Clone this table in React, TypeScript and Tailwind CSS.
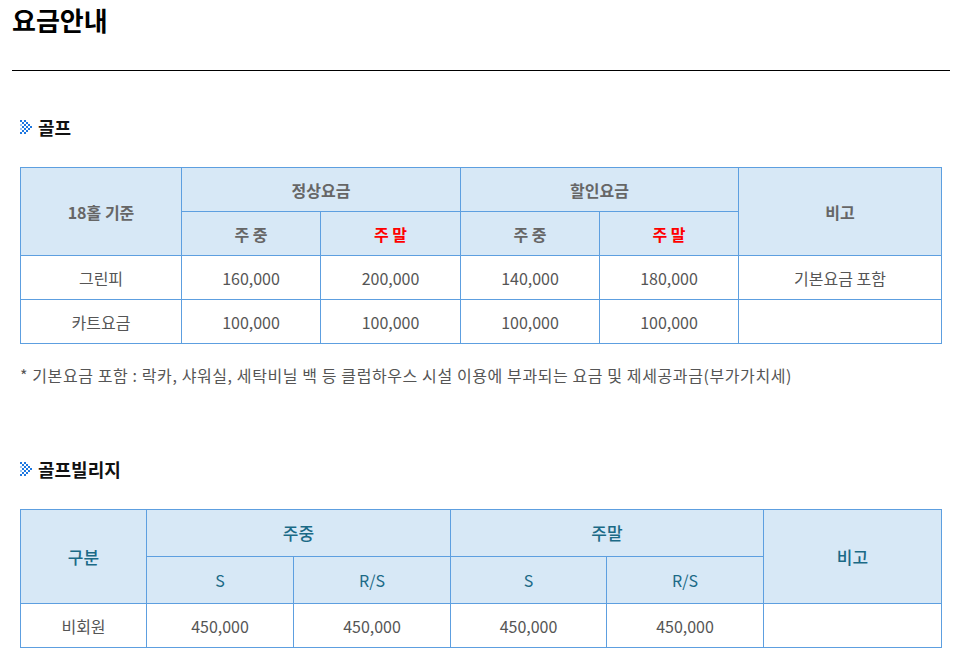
import React from "react";

const font = { fontFamily: '"Noto Sans CJK KR", "Noto Sans", sans-serif' };

// dotted double chevron, 2px cells
const ICON_CELLS: [number, number][] = [
  [0, 0], [2, 0],
  [1, 1], [3, 1],
  [2, 2], [4, 2], [0, 2],
  [3, 3], [5, 3], [1, 3],
  [2, 4], [4, 4], [0, 4],
  [1, 5], [3, 5],
  [0, 6], [2, 6],
];

function ArrowIcon() {
  return (
    <svg width="13" height="14" viewBox="0 0 13 14" className="shrink-0">
      {ICON_CELLS.map(([c, r], i) => (
        <rect
          key={i}
          x={c * 2}
          y={r * 2}
          width="2"
          height="2"
          fill={c === 0 && (r === 2 || r === 4) ? "#9cc6f2" : "#1f78e0"}
        />
      ))}
    </svg>
  );
}

function SectionTitle({ children }: { children: React.ReactNode }) {
  return (
    <div className="flex items-center gap-[5px] pl-[20px]">
      <ArrowIcon />
      <h3 className="text-[18px] font-bold text-[#111] leading-none">{children}</h3>
    </div>
  );
}

const th = "border border-[#5d9fe0] bg-[#d7e8f6] text-center";
const th1 = `${th} text-[16px] font-bold text-[#666]`;
const th1Red = `${th} text-[16px] font-bold text-[#ff0000]`;
const th2 = `${th} text-[17px] font-medium text-[#1b6a86]`;
const th2Sub = `${th} text-[16px] font-normal text-[#1b6a86]`;
const td = "border border-[#5d9fe0] bg-white text-center text-[16px] text-[#555]";

export default function App() {
  return (
    <div className="bg-white w-[965px] h-[672px] overflow-hidden" style={font}>
      <div className="px-[12px] pt-[2px]">
        <h2 className="text-[26px] font-bold text-black leading-[36px]">요금안내</h2>
        <div className="mt-[32px] border-t border-black w-[938px]" />
      </div>

      <div className="mt-[47px]">
        <SectionTitle>골프</SectionTitle>
      </div>

      <div className="px-[20px] mt-[31px]">
        <table className="w-[922px] border-collapse table-fixed">
          <colgroup>
            <col className="w-[161px]" />
            <col className="w-[139px]" />
            <col className="w-[140px]" />
            <col className="w-[139px]" />
            <col className="w-[139px]" />
            <col />
          </colgroup>
          <thead>
            <tr className="h-[44px]">
              <th rowSpan={2} className={th1}>18홀 기준</th>
              <th colSpan={2} className={th1}>정상요금</th>
              <th colSpan={2} className={th1}>할인요금</th>
              <th rowSpan={2} className={th1}>비고</th>
            </tr>
            <tr className="h-[44px]">
              <th className={th1}>주 중</th>
              <th className={th1Red}>주 말</th>
              <th className={th1}>주 중</th>
              <th className={th1Red}>주 말</th>
            </tr>
          </thead>
          <tbody>
            <tr className="h-[44px]">
              <td className={td}>그린피</td>
              <td className={td}>160,000</td>
              <td className={td}>200,000</td>
              <td className={td}>140,000</td>
              <td className={td}>180,000</td>
              <td className={td}>기본요금 포함</td>
            </tr>
            <tr className="h-[44px]">
              <td className={td}>카트요금</td>
              <td className={td}>100,000</td>
              <td className={td}>100,000</td>
              <td className={td}>100,000</td>
              <td className={td}>100,000</td>
              <td className={td}></td>
            </tr>
          </tbody>
        </table>
        <p className="mt-[19px] text-[16px] tracking-[0.6px] text-[#555] leading-[24px]">
          * 기본요금 포함 : 락카, 샤워실, 세탁비닐 백 등 클럽하우스 시설 이용에 부과되는 요금 및 제세공과금(부가가치세)
        </p>
      </div>

      <div className="mt-[73px]">
        <SectionTitle>골프빌리지</SectionTitle>
      </div>

      <div className="px-[20px] mt-[31px]">
        <table className="w-[922px] border-collapse table-fixed">
          <colgroup>
            <col className="w-[126px]" />
            <col className="w-[147px]" />
            <col className="w-[157px]" />
            <col className="w-[156px]" />
            <col className="w-[157px]" />
            <col />
          </colgroup>
          <thead>
            <tr className="h-[47px]">
              <th rowSpan={2} className={th2}>구분</th>
              <th colSpan={2} className={th2}>주중</th>
              <th colSpan={2} className={th2}>주말</th>
              <th rowSpan={2} className={th2}>비고</th>
            </tr>
            <tr className="h-[47px]">
              <th className={th2Sub}>S</th>
              <th className={th2Sub}>R/S</th>
              <th className={th2Sub}>S</th>
              <th className={th2Sub}>R/S</th>
            </tr>
          </thead>
          <tbody>
            <tr className="h-[44px]">
              <td className={td}>비회원</td>
              <td className={td}>450,000</td>
              <td className={td}>450,000</td>
              <td className={td}>450,000</td>
              <td className={td}>450,000</td>
              <td className={td}></td>
            </tr>
          </tbody>
        </table>
      </div>
    </div>
  );
}
